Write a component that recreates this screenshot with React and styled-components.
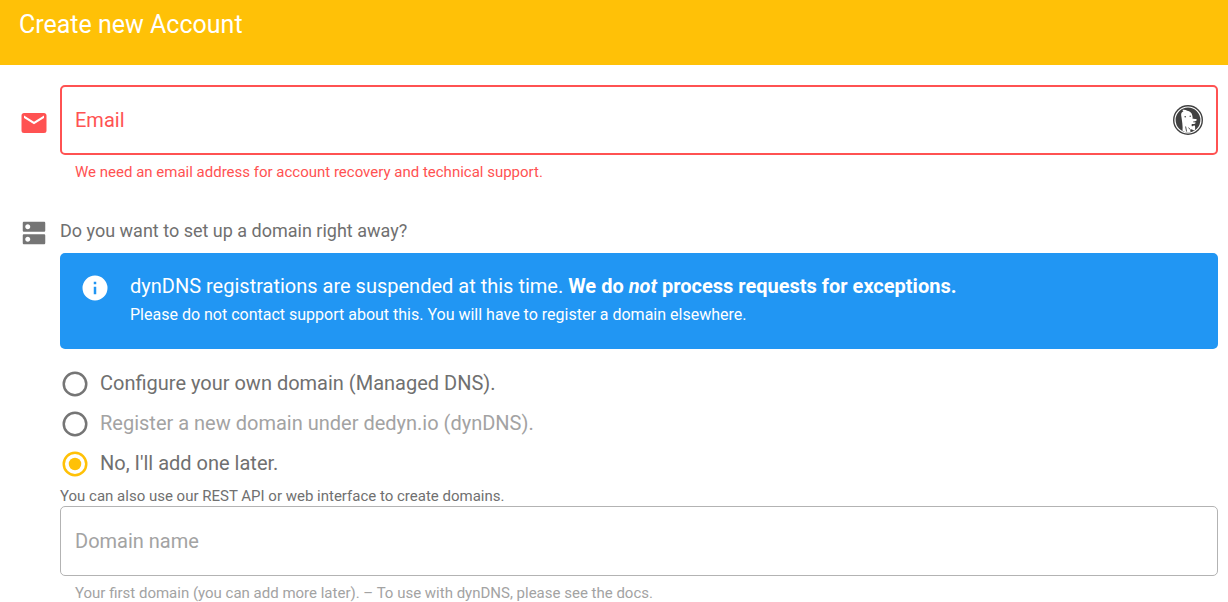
import React, { useState } from "react";
import styled, { createGlobalStyle } from "styled-components";

const GlobalStyle = createGlobalStyle`
  *, *::before, *::after { box-sizing: border-box; }
  body {
    margin: 0;
    background: #fff;
    color: #707070;
    font-family: Roboto, "Liberation Sans", sans-serif;
    font-size: 20px;
  }
`;

const RED = "#ff5252";
const AMBER = "#ffc107";

const Toolbar = styled.header`
  background: ${AMBER};
  color: #fff;
  padding: 10px 19px 25px;
`;

const Title = styled.h1`
  margin: 0;
  font-size: 25px;
  font-weight: 400;
  line-height: 30px;
`;

const Form = styled.form`
  display: flex;
  flex-direction: column;
  gap: 37px;
  padding: 20px 10px 0 19px;
`;

const Row = styled.div`
  display: flex;
  align-items: flex-start;
  gap: 11px;
`;

const RowIcon = styled.svg`
  flex: none;
  width: 30px;
  height: 30px;
  margin-top: ${(p) => (p.$tall ? "23px" : "0")};
  fill: ${(p) => (p.$error ? RED : "#757575")};
`;

const RowBody = styled.div`
  flex: 1;
  min-width: 0;
`;

const FieldBox = styled.div`
  display: grid;
  grid-template-columns: 1fr auto;
  align-items: center;
  height: 70px;
  padding: 0 ${(p) => (p.$error ? "13px" : "14px")};
  border: ${(p) => (p.$error ? `2px solid ${RED}` : "1px solid #b3b3b3")};
  border-radius: 5px;
`;

const FieldLabel = styled.label`
  grid-area: 1 / 1;
  line-height: 24px;
  color: ${(p) => (p.$error ? RED : "#a3a3a3")};
  pointer-events: none;
`;

const FieldInput = styled.input`
  grid-area: 1 / 1;
  width: 100%;
  height: 40px;
  padding: 0;
  border: 0;
  outline: 0;
  background: transparent;
  color: inherit;
  font: inherit;
`;

const FieldButton = styled.button`
  grid-area: 1 / 2;
  width: 30px;
  height: 30px;
  padding: 0;
  border: 0;
  background: none;
  cursor: pointer;

  svg { display: block; width: 30px; height: 30px; }
`;

const Helper = styled.p`
  margin: 0;
  padding: 8px 15px 0;
  font-size: 15px;
  line-height: 18px;
  color: ${(p) => (p.$error ? RED : "#a3a3a3")};
`;

const Choices = styled.fieldset`
  margin: 0;
  padding: 0;
  border: 0;
  min-width: 0;
`;

const Question = styled.legend`
  padding: 0;
  font-size: 18px;
  line-height: 26px;
  margin-bottom: 9px;
`;

const Alert = styled.div`
  display: flex;
  align-items: flex-start;
  gap: 20px;
  padding: 20px 20px 21px;
  margin-bottom: 15px;
  border-radius: 5px;
  background: #2196f3;
  color: #fff;
`;

const AlertIcon = styled.svg`
  flex: none;
  width: 30px;
  height: 30px;
  fill: #fff;
`;

const AlertText = styled.div`
  line-height: 26px;
`;

const AlertNote = styled.p`
  margin: 0;
  padding-top: 3px;
  font-size: 16px;
  line-height: 26px;
`;

const Option = styled.label`
  display: flex;
  gap: 10px;
  height: 40px;
  padding-top: 5px;
  line-height: 28px;
  color: ${(p) => (p.$disabled ? "#a3a3a3" : "#707070")};
`;

const OptionMark = styled.span`
  display: grid;
  width: 30px;
  height: 30px;

  input, svg { grid-area: 1 / 1; width: 30px; height: 30px; margin: 0; }
  input { appearance: none; }
  svg { pointer-events: none; fill: ${(p) => (p.$checked ? AMBER : "#757575")}; }
`;

const Hint = styled.p`
  margin: 0;
  padding: 3px 0 1px;
  font-size: 15px;
  line-height: 18px;
`;

const RING =
  "M12,20A8,8 0 0,1 4,12A8,8 0 0,1 12,4A8,8 0 0,1 20,12A8,8 0 0,1 12,20M12,2A10,10 0 0,0 2,12A10,10 0 0,0 12,22A10,10 0 0,0 22,12A10,10 0 0,0 12,2Z";

function RadioOption({ value, selected, onSelect, disabled, children }) {
  const checked = selected === value;
  return (
    <Option $disabled={disabled}>
      <OptionMark $checked={checked}>
        <input
          type="radio"
          name="domainType"
          value={value}
          checked={checked}
          disabled={disabled}
          onChange={() => onSelect(value)}
        />
        <svg viewBox="0 0 24 24" aria-hidden="true">
          <path d={RING} />
          {checked && <circle cx="12" cy="12" r="5" />}
        </svg>
      </OptionMark>
      {children}
    </Option>
  );
}

function DuckIcon() {
  return (
    <svg viewBox="0 0 30 30" aria-hidden="true">
      <circle cx="15" cy="15" r="15" fill="#404040" />
      <circle cx="15" cy="15" r="13" fill="none" stroke="#fff" strokeWidth="1.2" />
      <path
        fill="#fff"
        d="M8.2 10.4C7.9 8.4 8.8 6.8 10.4 6.2C10 5.7 9.6 5.3 9.2 5C11.2 4.5 13 5 14.2 5.8C16.8 6 18.8 7.8 19.3 10.4C19.6 11.8 19.7 12.8 19.6 13.8C21.2 13.9 22.8 14 23.8 14.4C24 15.3 22.9 16 20.6 16.5C19.5 16.8 19.8 17.1 20.6 17.3C21.7 17.5 22.6 17.3 22.8 17.8C22.5 18.9 20.4 19.2 18.9 18.9C18.5 19.6 18.5 20.6 19 21.4C20.3 20.6 21.8 20.3 22 20.9C22.3 22.6 22.2 24.6 21.7 25.2C21.1 25.5 19.8 24.9 18.8 24.2L17.2 24.7L17.5 27.1C15.4 27.6 13.5 27.4 12.1 26.9C11.2 26.7 10.2 26.2 9.5 25.7C10 21 9 16 8.2 10.4Z"
      />
      <circle cx="12.2" cy="11.8" r="0.8" fill="#404040" />
      <circle cx="17.2" cy="11.2" r="0.7" fill="#404040" />
      <path d="M12.6 21.5L13.6 26.6M15.6 22.6L17.2 24.6" fill="none" stroke="#404040" strokeWidth="0.9" />
    </svg>
  );
}

export default function App() {
  const [email, setEmail] = useState("");
  const [choice, setChoice] = useState("none");

  return (
    <>
      <GlobalStyle />
      <Toolbar>
        <Title>Create new Account</Title>
      </Toolbar>
      <Form>
        <Row>
          <RowIcon $error $tall viewBox="0 0 24 24" aria-hidden="true">
            <path d="M20,8L12,13L4,8V6L12,11L20,6M20,4H4C2.89,4 2,4.89 2,6V18A2,2 0 0,0 4,20H20A2,2 0 0,0 22,18V6C22,4.89 21.1,4 20,4Z" />
          </RowIcon>
          <RowBody>
            <FieldBox $error>
              {!email && <FieldLabel $error htmlFor="email">Email</FieldLabel>}
              <FieldInput
                id="email"
                type="email"
                aria-label="Email"
                aria-invalid="true"
                aria-describedby="email-help"
                value={email}
                onChange={(e) => setEmail(e.target.value)}
              />
              <FieldButton type="button" aria-label="Email protection">
                <DuckIcon />
              </FieldButton>
            </FieldBox>
            <Helper $error id="email-help">
              We need an email address for account recovery and technical support.
            </Helper>
          </RowBody>
        </Row>
        <Row>
          <RowIcon viewBox="0 0 24 24" aria-hidden="true">
            <path d="M20 13H4c-.55 0-1 .45-1 1v6c0 .55.45 1 1 1h16c.55 0 1-.45 1-1v-6c0-.55-.45-1-1-1zM7 19c-1.1 0-2-.9-2-2s.9-2 2-2 2 .9 2 2-.9 2-2 2zM20 3H4c-.55 0-1 .45-1 1v6c0 .55.45 1 1 1h16c.55 0 1-.45 1-1V4c0-.55-.45-1-1-1zM7 9c-1.1 0-2-.9-2-2s.9-2 2-2 2 .9 2 2-.9 2-2 2z" />
          </RowIcon>
          <RowBody>
            <Choices>
              <Question>Do you want to set up a domain right away?</Question>
              <Alert>
                <AlertIcon viewBox="0 0 24 24" aria-hidden="true">
                  <path d="M13,9H11V7H13M13,17H11V11H13M12,2A10,10 0 0,0 2,12A10,10 0 0,0 12,22A10,10 0 0,0 22,12A10,10 0 0,0 12,2Z" />
                </AlertIcon>
                <AlertText>
                  dynDNS registrations are suspended at this time.{" "}
                  <b>We do <i>not</i> process requests for exceptions.</b>
                  <AlertNote>
                    Please do not contact support about this. You will have to register a domain elsewhere.
                  </AlertNote>
                </AlertText>
              </Alert>
              <RadioOption value="custom" selected={choice} onSelect={setChoice}>
                Configure your own domain (Managed DNS).
              </RadioOption>
              <RadioOption value="dynDNS" selected={choice} onSelect={setChoice} disabled>
                Register a new domain under dedyn.io (dynDNS).
              </RadioOption>
              <RadioOption value="none" selected={choice} onSelect={setChoice}>
                No, I'll add one later.
              </RadioOption>
            </Choices>
            <Hint>You can also use our REST API or web interface to create domains.</Hint>
            <FieldBox>
              <FieldLabel htmlFor="domain">Domain name</FieldLabel>
              <FieldInput id="domain" type="text" disabled aria-describedby="domain-help" />
            </FieldBox>
            <Helper id="domain-help">
              Your first domain (you can add more later). – To use with dynDNS, please see the docs.
            </Helper>
          </RowBody>
        </Row>
      </Form>
    </>
  );
}
